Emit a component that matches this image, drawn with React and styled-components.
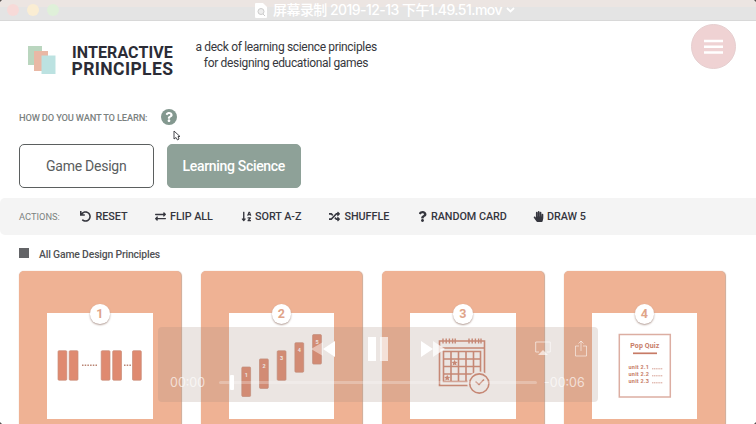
import React from 'react';
import styled, { createGlobalStyle } from 'styled-components';
import {
  FaUndo, FaExchangeAlt, FaSortAlphaDown, FaRandom, FaQuestion, FaHandPaper,
} from 'react-icons/fa';

const GlobalStyle = createGlobalStyle`
  * { box-sizing: border-box; }
  body { margin: 0; background: #fff; font-family: Roboto, "Noto Sans CJK SC", sans-serif; overflow: hidden; }
  svg { display: block; flex: none; }
`;

const Window = styled.div`
  position: relative;
  width: 756px;
  height: 424px;
  overflow: hidden;
  background: #fff;
  color: #36373c;
`;

const TitleBar = styled.header`
  display: grid;
  grid-template-columns: 255px 1fr;
  height: 21px;
  background: linear-gradient(#ece5e2 0 7px, #e4e4e4 7px);
  border-bottom: 1px solid #d8d8d8;
`;

const Lights = styled.div`
  display: flex;
  gap: 8px;
  padding: 4px 0 0 7px;
`;

const Light = styled.i`
  width: 12px;
  height: 12px;
  border-radius: 50%;
  background: ${(p) => p.$color};
`;

const FileTitle = styled.div`
  display: flex;
  align-items: center;
  height: 20px;
  color: #fff;
  font: 500 14px/20px Inter, "Noto Sans CJK SC", sans-serif;
  white-space: pre;
  span { margin: 0 5px 0 6px; width: 228px; letter-spacing: -0.55px; }
`;

const Masthead = styled.div`
  display: flex;
  align-items: flex-start;
  height: 83px;
  padding-left: 28px;
`;

const LogoMark = styled.svg`
  margin-top: 25px;
`;

const Brand = styled.h1`
  margin: 22px 0 0 16px;
  width: 123.5px;
  font-size: 16px;
  font-weight: 700;
  color: #2b2c36;
  white-space: nowrap;
  span { display: block; line-height: 19px; margin-bottom: -3px; letter-spacing: 0.1px; }
  span + span { font-size: 17.5px; line-height: 21px; letter-spacing: 0.4px; margin: 0 0 0 -0.5px; }
`;

const Tagline = styled.p`
  margin: 19px 0 0;
  width: 181px;
  font-size: 12px;
  line-height: 15.5px;
  letter-spacing: -0.33px;
  text-align: center;
  white-space: nowrap;
  span { display: block; }
  span + span { letter-spacing: -0.33px; }
`;

const MenuButton = styled.button`
  display: grid;
  place-items: center;
  width: 45px;
  height: 45px;
  margin: 3px 0 0 314.5px;
  padding: 0;
  border: 1px solid #e6cfd0;
  border-radius: 50%;
  background: #efd2d3;
`;

const Question = styled.div`
  display: flex;
  align-items: center;
  gap: 13px;
  height: 26px;
  padding-left: 19px;
  color: #7b827f;
  font-size: 9.3px;
  font-weight: 500;
  letter-spacing: -0.16px;
  span { width: 129px; white-space: nowrap; }
`;

const Help = styled.i`
  display: grid;
  place-items: center;
  width: 16px;
  height: 16px;
  border-radius: 50%;
  background: #83988f;
  color: #fff;
`;

const Modes = styled.div`
  display: flex;
  gap: 13px;
  padding: 14px 0 10px 19px;
`;

const Mode = styled.button`
  width: 134.5px;
  height: 44px;
  padding: 0;
  border-radius: 5px;
  border: 1.5px solid ${(p) => (p.$active ? '#8ea198' : '#5b5f5f')};
  background: ${(p) => (p.$active ? '#8ea198' : '#fff')};
  color: ${(p) => (p.$active ? '#fff' : '#5a5d5e')};
  font: ${(p) => (p.$active ? 500 : 400)} 14px Roboto, sans-serif;
  letter-spacing: ${(p) => p.$track}px;
`;

const Toolbar = styled.nav`
  display: flex;
  align-items: center;
  height: 37px;
  padding-left: 19px;
  border-radius: 5px 0 0 5px;
  background: #f4f4f4;
`;

const ToolLabel = styled.span`
  width: 61px;
  color: #7b827f;
  font-size: 9.3px;
`;

const Action = styled.button`
  display: flex;
  align-items: center;
  gap: ${(p) => p.$gap}px;
  width: ${(p) => p.$width}px;
  padding: 0;
  border: 0;
  background: none;
  color: #35363e;
  font: 500 10.8px Roboto, sans-serif;
  letter-spacing: -0.05px;
  white-space: nowrap;
`;

const Filter = styled.div`
  display: flex;
  align-items: center;
  gap: 10px;
  height: 35.5px;
  padding: 3px 0 0 19px;
  font-size: 10.4px;
  font-weight: 500;
  letter-spacing: -0.17px;
  color: #505154;
  i { width: 10px; height: 10px; background: #636467; margin-top: -2px; }
`;

const Cards = styled.main`
  display: grid;
  grid-template-columns: repeat(4, 161.5px);
  gap: 20px;
  padding-left: 19px;
`;

const Card = styled.article`
  height: 170px;
  padding: 42.5px 0 0 28px;
  border-radius: 5px;
  background: #efb294;
  box-shadow: 0.5px 0 1px #cfa893;
`;

const Panel = styled.div`
  position: relative;
  width: 105.5px;
  height: 105.5px;
  background: #fff;
`;

const Badge = styled.b`
  position: absolute;
  left: 43px;
  top: -9px;
  width: 19.5px;
  height: 19.5px;
  border-radius: 50%;
  background: #fff;
  box-shadow: 0 1px 2px #b09a92;
  color: #dfa489;
  font: 700 12.5px/20px Roboto, sans-serif;
  text-align: center;
`;

const Player = styled.section`
  position: absolute;
  left: 158px;
  top: 327px;
  width: 440px;
  height: 75px;
  border-radius: 4px;
  background: rgba(168, 143, 130, 0.23);
`;

const Controls = styled.div`
  display: flex;
  align-items: center;
  height: 43px;
  padding-left: 153px;
`;

const Control = styled.svg`
  margin-right: ${(p) => p.$after || 0}px;
`;

const Scrubber = styled.div`
  display: flex;
  align-items: center;
  height: 25px;
  padding-left: 12px;
  color: rgba(255, 255, 255, 0.65);
  font: 400 12.5px Inter, sans-serif;
  white-space: nowrap;
  span:first-child { width: 49px; }
`;

const Track = styled.div`
  width: 318px;
  height: 3px;
  margin-right: 7px;
  border-radius: 2px;
  background: rgba(255, 255, 255, 0.26);
  i { display: block; width: 4px; height: 15px; margin-left: 10.5px; transform: translateY(-6px); border-radius: 1px; background: #fff; }
`;

const Pointer = styled.svg`
  position: absolute;
  left: 173px;
  top: 130px;
`;

const Corner = styled.i`
  position: absolute;
  ${(p) => p.$x}: 0;
  ${(p) => p.$y}: 0;
  width: 2px;
  height: 2px;
  background: #55504f;
  clip-path: polygon(${(p) => p.$clip});
`;

function Bar({ x, y }) {
  return <rect x={x} y={y} width="8.8" height="29.5" rx="1" fill="#df8a70" stroke="#c98c78" strokeWidth="0.7" />;
}

function Sequence() {
  return (
    <svg width="105" height="105">
      {[11, 22.2, 54.2, 65.7, 85.5].map((x) => <Bar key={x} x={x} y={37.7} />)}
      <path d="M35 52.2h15M77 52.2h7" stroke="#b98473" strokeWidth="1.4" strokeDasharray="1.5 1.2" />
    </svg>
  );
}

function Steps() {
  return (
    <svg width="105" height="105">
      {[1, 2, 3, 4, 5].map((n, i) => (
        <g key={n}>
          <Bar x={12.8 + i * 17.7} y={54 - i * 8.1} />
          <text x={17.3 + i * 17.7} y={63.5 - i * 8.1} fontSize="5.5" fontWeight="700" fill="#fff" textAnchor="middle">{n}</text>
        </g>
      ))}
    </svg>
  );
}

const STAR = 'M0-3 .9-1 3-.9 1.4.6 2 2.8 0 1.6-2 2.8-1.4.6-3-.9-.9-1Z';

function Calendar() {
  const ink = '#cf8672';
  return (
    <svg width="105" height="105" fill="none" stroke={ink} strokeWidth="1.6">
      <path d="M29.5 28h45v44.5h-45ZM29.5 35h45" />
      <path d="M33 25.5v5M36.2 25.5v5M39.4 25.5v5M42.6 25.5v5M45.2 25.5v5M59 25.5v5M62.2 25.5v5M65.4 25.5v5M68.6 25.5v5M71 25.5v5" strokeWidth="1.4" />
      <path d="M33.5 38.5h37v30h-37ZM41 38.5v30M48.5 38.5v30M56 38.5v30M63.5 38.5v30M33.5 46h37M33.5 53.5h37M33.5 61h37" />
      <path d={STAR} transform="translate(44.6 49.8)" fill={ink} stroke="none" />
      <path d={STAR} transform="translate(37.2 64.8)" fill={ink} stroke="none" />
      <circle cx="69.3" cy="70.5" r="12" fill="#fff" stroke="none" />
      <circle cx="69.3" cy="70.5" r="9.6" />
      <path d="m65.5 68.5 3.5 3 5-5" strokeWidth="1.6" />
    </svg>
  );
}

function Quiz() {
  return (
    <svg width="105" height="105" fill="#c77b66">
      <rect x="27.3" y="21.5" width="51" height="62.5" fill="none" stroke="#dcaea2" strokeWidth="1.5" />
      <text x="52.8" y="35.3" fontSize="7" fontWeight="700" textAnchor="middle" textLength="29">Pop Quiz</text>
      <path d="M41 40.3h24" stroke="#c77b66" strokeWidth="1.7" />
      {['unit 2.1', 'unit 2.2', 'unit 2.3'].map((label, i) => (
        <g key={label}>
          <text x="36.5" y={56.3 + i * 7} fontSize="5.5" fontWeight="700" textLength="20.5">{label}</text>
          <path d={`M60 ${55.8 + i * 7}h10.5`} stroke="#d6a194" strokeWidth="1" strokeDasharray="1.3 .5" />
        </g>
      ))}
    </svg>
  );
}

const actions = [
  { icon: FaUndo, size: 11, gap: 4.5, label: 'RESET', width: 75 },
  { icon: FaExchangeAlt, size: 11, gap: 4, label: 'FLIP ALL', width: 86 },
  { icon: FaSortAlphaDown, size: 11, gap: 3, label: 'SORT A-Z', width: 88 },
  { icon: FaRandom, size: 11, gap: 4.5, label: 'SHUFFLE', width: 88 },
  { icon: FaQuestion, size: 11, gap: 3, label: 'RANDOM CARD', width: 116 },
  { icon: FaHandPaper, size: 11, gap: 3, label: 'DRAW 5', width: 70 },
];

const cards = [Sequence, Steps, Calendar, Quiz];

export default function App() {
  return (
    <Window>
      <GlobalStyle />
      <TitleBar>
        <Lights>
          <Light $color="#f7dad8" /><Light $color="#faedd3" /><Light $color="#dff0d9" />
        </Lights>
        <FileTitle>
          <svg width="12" height="15"><path d="M1 0h7l4 4v10a1 1 0 0 1-1 1H1a1 1 0 0 1-1-1V1a1 1 0 0 1 1-1Z" fill="#fff" /><circle cx="6" cy="8.5" r="3" fill="#eee" stroke="#ccc" /><path d="m8 11 2 2" stroke="#ccc" /></svg>
          <span>屏幕录制 2019-12-13 下午1.49.51.mov</span>
          <svg width="9" height="6" fill="none" stroke="#fff" strokeWidth="1.8"><path d="m1 1 3.5 3.5L8 1" /></svg>
        </FileTitle>
      </TitleBar>

      <Masthead>
        <LogoMark width="28" height="29">
          <path d="M0 0h14v19H0Z" fill="#bad6bf" />
          <path d="M6 5h14v20H6Z" fill="#e9b8a5" />
          <path d="M13.5 9.5h14V28h-14Z" fill="#bce2e1" />
        </LogoMark>
        <Brand><span>INTERACTIVE</span><span>PRINCIPLES</span></Brand>
        <Tagline><span>a deck of learning science principles</span><span>for designing educational games</span></Tagline>
        <MenuButton aria-label="Menu">
          <svg width="19" height="15" stroke="#fff" strokeWidth="2.5"><path d="M0 2h19M0 7.8h19M0 13.6h19" /></svg>
        </MenuButton>
      </Masthead>

      <Question><span>HOW DO YOU WANT TO LEARN:</span><Help><FaQuestion size={10} /></Help></Question>

      <Modes>
        <Mode $track={-0.25}>Game Design</Mode>
        <Mode $active $track={-0.32}>Learning Science</Mode>
      </Modes>

      <Toolbar>
        <ToolLabel>ACTIONS:</ToolLabel>
        {actions.map(({ icon: Icon, size, gap, label, width }) => (
          <Action key={label} $gap={gap} $width={width}><Icon size={size} />{label}</Action>
        ))}
      </Toolbar>

      <Filter><i />All Game Design Principles</Filter>

      <Cards>
        {cards.map((Art, i) => (
          <Card key={i}><Panel><Art /><Badge>{i + 1}</Badge></Panel></Card>
        ))}
      </Cards>

      <Player>
        <Controls>
          <Control width="24" height="16" $after={33}><path d="M12 1v14L0 8Z" fill="#fff" opacity=".45" /><path d="M24 0v16L12 8Z" fill="#fff" /></Control>
          <Control width="20" height="24" $after={33}><path d="M0 0h8v24H0Z" fill="#fff" /><path d="M12 0h8v24h-8Z" fill="#fff" opacity=".65" /></Control>
          <Control width="24" height="16" $after={90}><path d="M0 0v16l12-8Z" fill="#fff" /><path d="M12 0v16l12-8Z" fill="#fff" opacity=".75" /></Control>
          <Control width="16" height="15" $after={24}><path d="M4 11H.7V1h14.6v10H12" fill="none" stroke="#fff" opacity=".6" /><path d="m8 9 5 5H3Z" fill="#fff" opacity=".65" /></Control>
          <Control width="12" height="17"><path d="M4 6H.5v10h11V6H8M6 11V1M3.5 3.5 6 1l2.5 2.5" fill="none" stroke="#fff" opacity=".55" /></Control>
        </Controls>
        <Scrubber><span>00:00</span><Track><i /></Track><span>-00:06</span></Scrubber>
      </Player>

      <Pointer width="8" height="11"><path d="M1 1v8l2-1.5L4.5 10 6 9 5 6.5h2Z" fill="#fff" stroke="#36373c" strokeWidth="0.9" /></Pointer>
      <Corner $x="left" $y="top" $clip="0 0, 100% 0, 0 100%" />
      <Corner $x="right" $y="top" $clip="0 0, 100% 0, 100% 100%" />
      <Corner $x="left" $y="bottom" $clip="0 0, 100% 100%, 0 100%" />
      <Corner $x="right" $y="bottom" $clip="100% 0, 100% 100%, 0 100%" />
    </Window>
  );
}
